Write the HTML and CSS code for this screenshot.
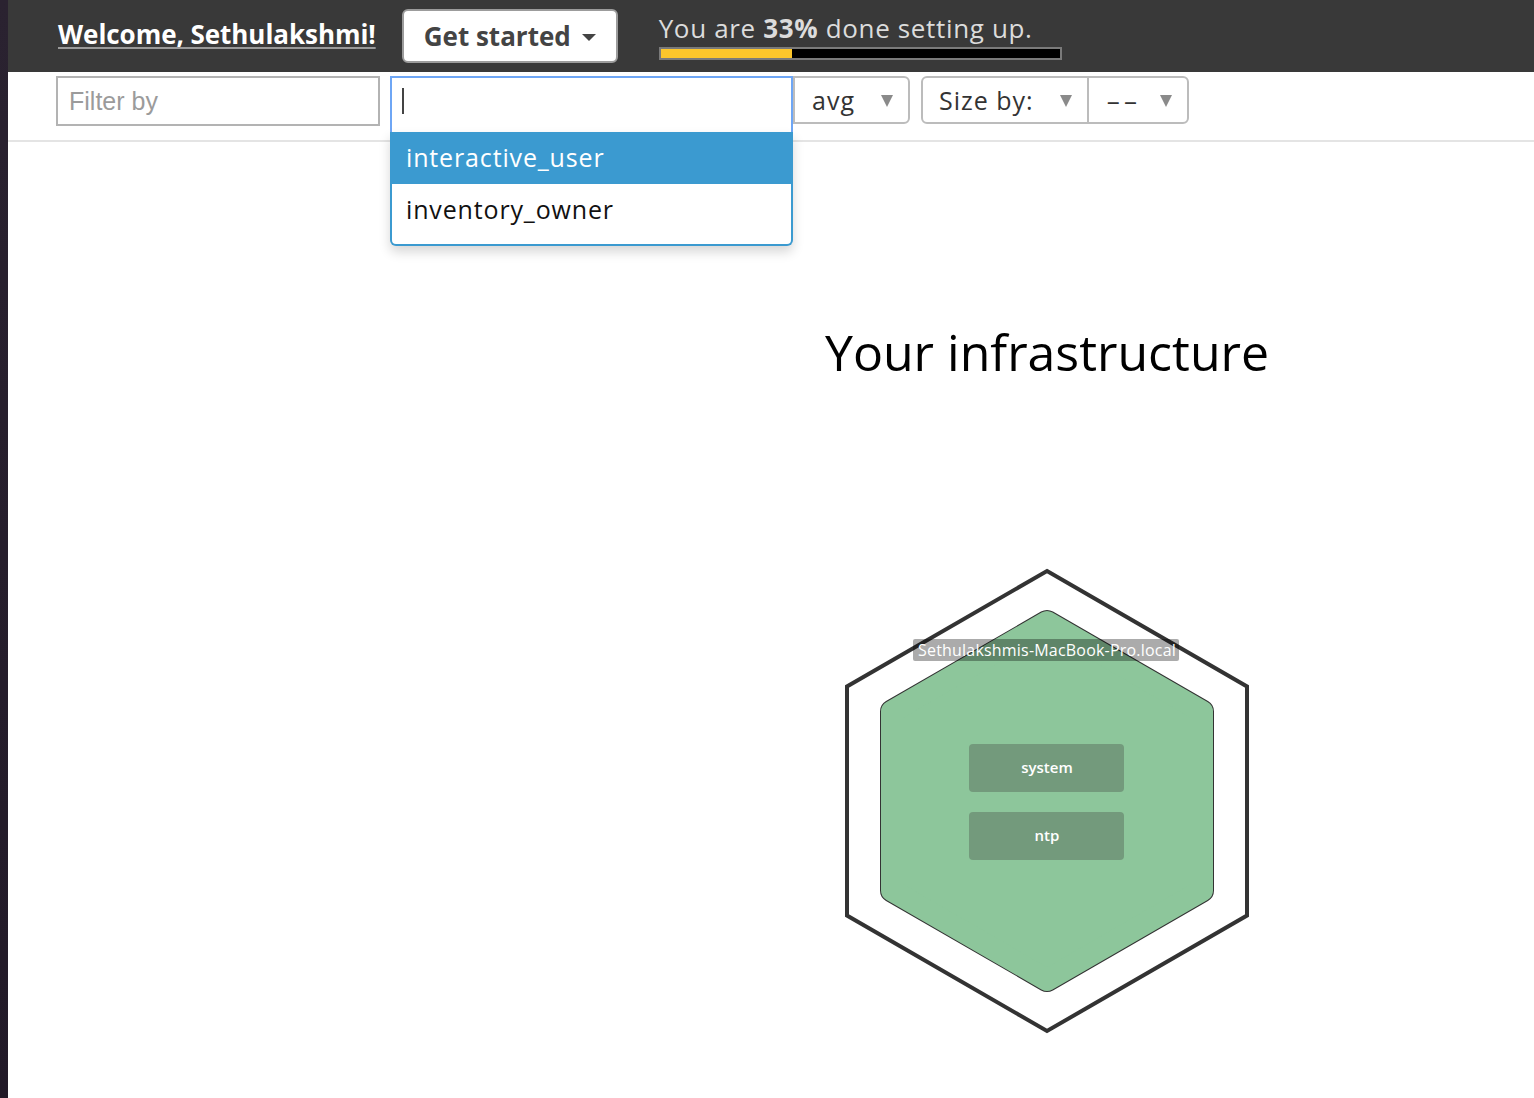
FILE: index.html
```html
<!DOCTYPE html>
<html lang="en">
<head>
<meta charset="utf-8">
<title>Infrastructure</title>
<link rel="stylesheet" href="styles.css">
</head>
<body>
<div class="app">
  <div class="desk-strip"></div>
  <div class="page">
    <header class="topbar">
      <a class="welcome" href="#">Welcome, Sethulakshmi!</a>
      <button class="get-started" type="button">Get started <span class="caret"></span></button>
      <div class="progress">
        <div class="progress-text">You are <b>33%</b> done setting up.</div>
        <div class="progress-bar"><div class="progress-fill" style="width:33%"></div></div>
      </div>
    </header>

    <div class="toolbar">
      <div class="filter-input">Filter by</div>
      <div class="metric-group">
        <div class="combo">
          <div class="combo-input"><span class="text-cursor"></span></div>
          <ul class="combo-menu">
            <li class="combo-item active">interactive_user</li>
            <li class="combo-item">inventory_owner</li>
          </ul>
        </div>
        <div class="select select-avg"><span class="select-label">avg</span><span class="arrow"></span></div>
      </div>
      <div class="size-group">
        <div class="select select-size"><span class="select-label">Size by:</span><span class="arrow"></span></div>
        <div class="select select-dash"><span class="select-label dash-label">--</span><span class="arrow"></span></div>
      </div>
    </div>

    <main class="canvas">
      <div class="map">
        <h1 class="map-title">Your infrastructure</h1>
        <svg class="hexmap" width="420" height="480" viewBox="0 0 420 480">
          <polygon class="hex-outer" points="210,10 410,125.5 410,354.5 210,470 10,354.5 10,125.5"/>
          <polygon class="hex-inner-edge" points="210,61 365,150.5 365,329.5 210,419 55,329.5 55,150.5"/>
          <polygon class="hex-inner-fill" points="210,61 365,150.5 365,329.5 210,419 55,329.5 55,150.5"/>
          <rect class="host-label-bg" x="76" y="78" width="266" height="22" rx="2"/>
          <text class="host-label" x="210" y="95">Sethulakshmis-MacBook-Pro.local</text>
          <rect class="app-box" x="132" y="183" width="155" height="48" rx="4"/>
          <text class="app-text" x="210" y="212">system</text>
          <rect class="app-box" x="132" y="251" width="155" height="48" rx="4"/>
          <text class="app-text" x="210" y="280">ntp</text>
        </svg>
      </div>
    </main>
  </div>
</div>
</body>
</html>
```
FILE: styles.css
```css
html, body {
  margin: 0;
  padding: 0;
  height: 100%;
  background: #ffffff;
}

.app {
  display: flex;
  height: 1098px;
  overflow: hidden;
  font-family: "Open Sans", "DejaVu Sans", sans-serif;
}

.desk-strip {
  width: 8px;
  flex: 0 0 8px;
  background: linear-gradient(#2a2230, #221a28);
}

.page {
  flex: 1;
  display: flex;
  flex-direction: column;
  background: #ffffff;
  min-width: 0;
}

/* ---------- top bar ---------- */
.topbar {
  height: 72px;
  flex: 0 0 72px;
  box-sizing: border-box;
  background: #393939;
  display: flex;
  align-items: flex-start;
  padding-left: 50px;
}

.welcome {
  margin-top: 16px;
  font-size: 26px;
  line-height: 36px;
  font-weight: 700;
  color: #ffffff;
  text-decoration: underline;
  text-decoration-color: #9a9a9a;
  text-decoration-thickness: 2px;
  text-underline-offset: 3px;
  letter-spacing: -0.05px;
}

.get-started {
  margin-left: 26px;
  margin-top: 9px;
  width: 216px;
  height: 54px;
  box-sizing: border-box;
  background: #ffffff;
  border: 2px solid #9c9c9c;
  border-radius: 6px;
  font-family: "Open Sans", "DejaVu Sans", sans-serif;
  font-size: 26px;
  font-weight: 700;
  color: #444444;
  display: flex;
  align-items: center;
  padding: 0 0 0 20px;
  gap: 11px;
}

.caret {
  width: 0;
  height: 0;
  border-left: 7px solid transparent;
  border-right: 7px solid transparent;
  border-top: 7px solid #444444;
  margin-top: 3px;
}

.progress {
  margin-left: 41px;
  margin-top: 11px;
  display: flex;
  flex-direction: column;
}

.progress-text {
  font-size: 26px;
  line-height: 34px;
  color: #dcdcdc;
  letter-spacing: 0.65px;
}

.progress-text b {
  font-weight: 700;
}

.progress-bar {
  margin-top: 2px;
  width: 403px;
  height: 13px;
  box-sizing: border-box;
  border: 2px solid #7a7a7a;
  background: #000000;
}

.progress-fill {
  height: 100%;
  background: #fcc62b;
}

/* ---------- toolbar ---------- */
.toolbar {
  height: 70px;
  flex: 0 0 70px;
  box-sizing: border-box;
  border-bottom: 2px solid #e4e4e4;
  display: flex;
  align-items: flex-start;
  padding: 4px 0 0 48px;
  position: relative;
  z-index: 2;
}

.filter-input {
  width: 324px;
  height: 50px;
  box-sizing: border-box;
  border: 2px solid #b3b3b3;
  font-family: "Liberation Sans", Arial, sans-serif;
  font-size: 25px;
  color: #9b9b9b;
  padding: 0 0 0 11px;
  line-height: 46px;
}

.metric-group {
  margin-left: 10px;
  display: flex;
  align-items: flex-start;
}

.combo {
  position: relative;
  width: 403px;
}

.combo-input {
  height: 56px;
  box-sizing: border-box;
  border: 2px solid #6ea6f5;
  border-bottom: none;
  background: #ffffff;
  position: relative;
}

.text-cursor {
  position: absolute;
  left: 10px;
  top: 10px;
  width: 2px;
  height: 26px;
  background: #444444;
}

.combo-menu {
  position: absolute;
  top: 56px;
  left: 0;
  right: 0;
  margin: 0;
  padding: 0 0 8px;
  list-style: none;
  background: #ffffff;
  border: 2px solid #3b9ad0;
  border-top: none;
  border-radius: 0 0 6px 6px;
  box-shadow: 0 6px 12px rgba(0, 0, 0, 0.16);
}

.combo-item {
  height: 52px;
  line-height: 50px;
  padding-left: 14px;
  font-size: 25px;
  color: #111111;
  letter-spacing: 0.85px;
}

.combo-item.active {
  background: #3b9ad0;
  color: #ffffff;
}

.select {
  height: 48px;
  box-sizing: border-box;
  border: 2px solid #bcbcbc;
  background: #ffffff;
  display: flex;
  align-items: center;
  justify-content: space-between;
  font-size: 25px;
  color: #333333;
}

.select-label {
  line-height: 44px;
  letter-spacing: 1px;
}

.dash-label {
  letter-spacing: 1.5px;
  display: inline-block;
  transform: scaleX(1.8);
  transform-origin: left center;
}

.select-avg {
  width: 117px;
  border-left-width: 2px;
  border-radius: 0 6px 6px 0;
  padding: 0 15px 0 17px;
}

.size-group {
  margin-left: 11px;
  display: flex;
  height: 48px;
  border: 2px solid #bcbcbc;
  border-radius: 6px;
  box-sizing: border-box;
}

.size-group .select {
  border: none;
  height: 44px;
  background: transparent;
}

.select-size {
  width: 166px;
  padding: 0 15px 0 16px;
  border-right: 2px solid #bcbcbc !important;
}

.select-dash {
  width: 98px;
  padding: 0 15px 0 17px;
}

.arrow {
  width: 0;
  height: 0;
  border-left: 6px solid transparent;
  border-right: 6px solid transparent;
  border-top: 12px solid #8a8a8a;
  margin-top: 2px;
}

/* ---------- canvas ---------- */
.canvas {
  flex: 1;
  position: relative;
  z-index: 1;
}

.map {
  margin-left: 552px;
  width: 974px;
  display: flex;
  flex-direction: column;
  align-items: center;
}

.map-title {
  margin: 176px 0 0;
  font-size: 50px;
  font-weight: 400;
  line-height: 68px;
  color: #000000;
}

.hexmap {
  display: block;
  margin-top: 175px;
}

.hex-outer {
  fill: none;
  stroke: #333333;
  stroke-width: 4;
  stroke-linejoin: miter;
}

.hex-inner-edge {
  fill: #333333;
  stroke: #333333;
  stroke-width: 24;
  stroke-linejoin: round;
}

.hex-inner-fill {
  fill: #8dc69b;
  stroke: #8dc69b;
  stroke-width: 22;
  stroke-linejoin: round;
}

.host-label-bg {
  fill: rgba(0, 0, 0, 0.33);
}

.host-label {
  fill: #ffffff;
  font-family: "Open Sans", "DejaVu Sans", sans-serif;
  font-size: 16px;
  letter-spacing: 0.2px;
  text-anchor: middle;
}

.app-box {
  fill: #739a7c;
}

.app-text {
  fill: #ffffff;
  font-family: "Open Sans", "DejaVu Sans", sans-serif;
  font-size: 15px;
  font-weight: 600;
  text-anchor: middle;
}
```
